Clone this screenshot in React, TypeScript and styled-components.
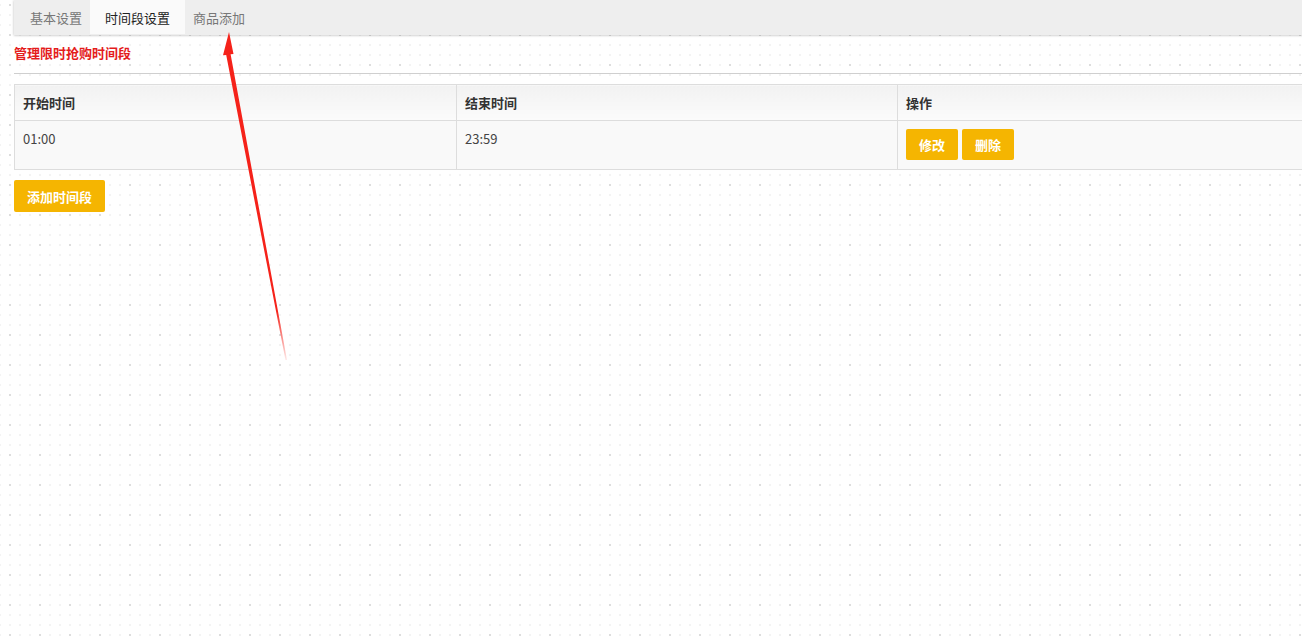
import styled, {createGlobalStyle} from 'styled-components'

interface TimeSlot {
    start: string
    end: string
}

const slots: TimeSlot[] = [{start: '01:00', end: '23:59'}]

const tabs = ['基本设置', '时间段设置', '商品添加']

const GlobalStyle = createGlobalStyle`
    html, body {
        margin: 0;
        padding: 0;
    }
    body {
        font-family: "Noto Sans CJK SC", "Liberation Sans", sans-serif;
        font-size: 13px;
        color: #333;
        background-color: #fff;
        background-image:
            radial-gradient(circle at 1px 1px, #dcdcdc 0.7px, transparent 1.1px),
            radial-gradient(circle at 1px 1px, #efefef 0.6px, transparent 1px);
        background-size: 30px 30px, 10px 10px;
        background-position: 9px 4px, 9px 4px;
        min-height: 643px;
        overflow: hidden;
    }
`

// time slot admin page
const App = () => {
    return (
        <>
            <GlobalStyle />
            <Page>
                <TabBar>
                    {tabs.map((t, i) => (
                        <Tab key={t} $active={i === 1}>
                            {t}
                        </Tab>
                    ))}
                </TabBar>
                <Title>管理限时抢购时间段</Title>
                <Divider />
                <Table>
                    <colgroup>
                        <col style={{width: 442}} />
                        <col style={{width: 441}} />
                        <col style={{width: 443}} />
                    </colgroup>
                    <thead>
                        <tr>
                            <Th>开始时间</Th>
                            <Th>结束时间</Th>
                            <Th>操作</Th>
                        </tr>
                    </thead>
                    <tbody>
                        {slots.map((s) => (
                            <tr key={s.start}>
                                <Td>{s.start}</Td>
                                <Td>{s.end}</Td>
                                <Td>
                                    <Actions>
                                        <YellowButton>修改</YellowButton>
                                        <YellowButton>删除</YellowButton>
                                    </Actions>
                                </Td>
                            </tr>
                        ))}
                    </tbody>
                </Table>
                <AddButton>添加时间段</AddButton>
                <Arrow width="80" height="340" viewBox="0 0 80 340">
                    <defs>
                        <linearGradient id="fade" x1="0" y1="0" x2="0" y2="1">
                            <stop offset="0" stopColor="#f5221a" />
                            <stop offset="0.85" stopColor="#f5221a" />
                            <stop offset="1" stopColor="#f5221a" stopOpacity="0.1" />
                        </linearGradient>
                    </defs>
                    <polygon points="15,8 19.5,30 16.6,30.3 73,336 71.5,336 12.2,30.9 9,31.2" fill="url(#fade)" />
                </Arrow>
            </Page>
        </>
    )
}

export default App

const Page = styled.div`
    position: relative;
    padding: 0 0 0 14px;
    width: 1326px;
`

const TabBar = styled.div`
    display: flex;
    height: 35px;
    padding-left: 8px;
    background: #eeeeee;
    box-shadow: 0 1px 2px rgba(0, 0, 0, 0.15), -1px 0 2px rgba(0, 0, 0, 0.08);
`

const Tab = styled.div<{$active?: boolean}>`
    display: flex;
    align-items: center;
    padding: ${(p) => (p.$active ? '0 15px' : '0 8px')};
    height: 34px;
    font-size: 13px;
    color: ${(p) => (p.$active ? '#222' : '#777')};
    background: ${(p) => (p.$active ? '#fafafa' : 'transparent')};
`

const Title = styled.div`
    margin-top: 9px;
    height: 18px;
    line-height: 18px;
    font-size: 13px;
    font-weight: bold;
    color: #e41c1c;
`

const Divider = styled.div`
    margin-top: 11px;
    height: 0;
    border-top: 1px solid #cfcfcf;
    width: 1288px;
`

const Table = styled.table`
    margin-top: 10px;
    border-collapse: collapse;
    table-layout: fixed;
    width: 1326px;
    background: #f9f9f9;
`

const Th = styled.th`
    height: 35px;
    padding: 0 8px;
    text-align: left;
    font-weight: bold;
    font-size: 13px;
    color: #333;
    border: 1px solid #dddddd;
    background: linear-gradient(to bottom, #f2f2f2, #fbfbfb);
`

const Td = styled.td`
    height: 49px;
    padding: 0 8px;
    vertical-align: top;
    padding-top: 8px;
    box-sizing: border-box;
    font-size: 13px;
    color: #444;
    border: 1px solid #dddddd;
`

const Actions = styled.div`
    display: flex;
    gap: 4px;
`

const YellowButton = styled.button`
    width: 52px;
    height: 31px;
    border: none;
    border-radius: 2px;
    background: #f5b501;
    color: #fff;
    font-family: inherit;
    font-size: 13px;
    font-weight: bold;
    padding: 0;
    cursor: pointer;
`

const AddButton = styled(YellowButton)`
    display: block;
    margin-top: 10px;
    width: 91px;
    height: 32px;
`

const Arrow = styled.svg`
    position: absolute;
    left: 214px;
    top: 24px;
    pointer-events: none;
`
